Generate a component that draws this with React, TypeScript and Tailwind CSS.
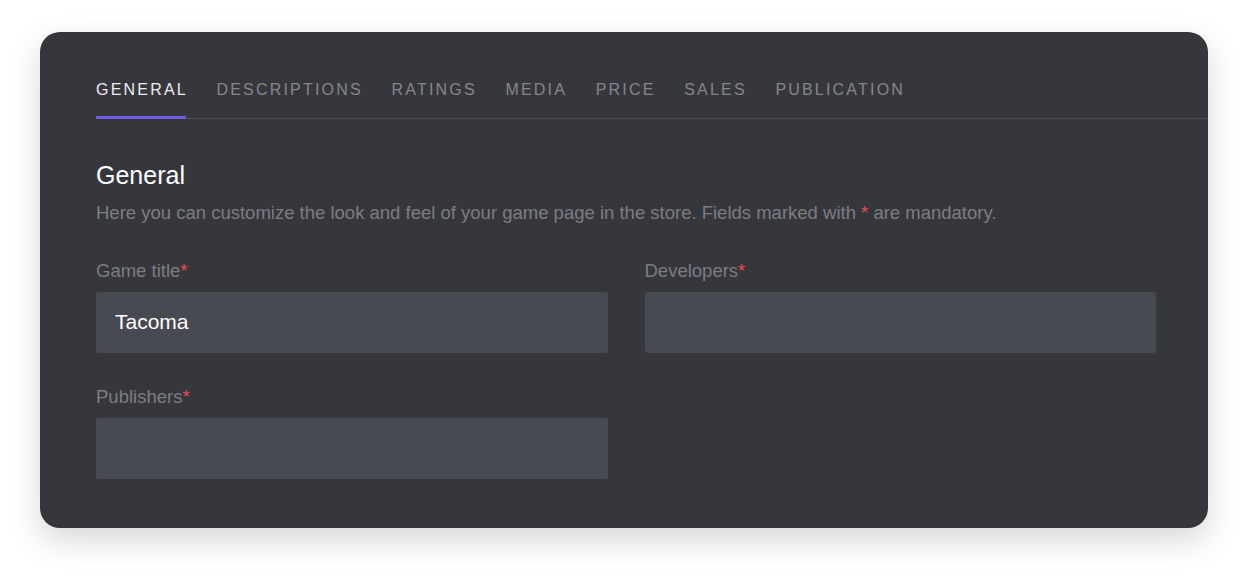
const tabs = ["General", "Descriptions", "Ratings", "Media", "Price", "Sales", "Publication"];

function Field({ label, value }: { label: string; value?: string }) {
  return (
    <div>
      <label className="block text-[18.5px] leading-6 text-[#7c7d83]">
        {label}
        <span className="text-[#e5484d]">*</span>
      </label>
      <div className="mt-[9px] h-[61px] rounded-[3px] bg-[#484a52] pl-[19px] pb-[2px] flex items-center text-[21px] text-white">
        {value}
      </div>
    </div>
  );
}

export default function App() {
  return (
    <div className="w-[1248px] h-[576px] bg-white pt-8 pl-10 font-['Liberation_Sans',Arial,sans-serif]">
      <div className="w-[1168px] h-[496px] rounded-[20px] bg-[#36373c] pt-[46px] pl-14 shadow-[0_12px_32px_rgba(0,0,0,0.16)]">
        <nav className="flex gap-[28.6px] border-b border-[#4b4c52]">
          {tabs.map((t, i) => (
            <div
              key={t}
              className={`relative pb-[16px] text-[16px] leading-6 uppercase tracking-[2.2px] ${
                i === 0 ? "text-[#ececee]" : "text-[#85868b]"
              }`}
            >
              {t}
              {i === 0 && <span className="absolute left-0 right-[2px] -bottom-px h-[3px] bg-[#6b5ce6]" />}
            </div>
          ))}
        </nav>

        <div className="pr-[52px]">
          <h2 className="mt-10 text-[25px] leading-8 text-white">General</h2>
          <p className="mt-[10px] text-[18.5px] leading-6 text-[#7c7d83]">
            Here you can customize the look and feel of your game page in the store. Fields marked with{" "}
            <span className="text-[#e5484d]">*</span> are mandatory.
          </p>

          <div className="mt-[34px] grid grid-cols-2 gap-x-[37px] gap-y-8">
            <Field label="Game title" value="Tacoma" />
            <Field label="Developers" />
            <Field label="Publishers" />
          </div>
        </div>
      </div>
    </div>
  );
}
